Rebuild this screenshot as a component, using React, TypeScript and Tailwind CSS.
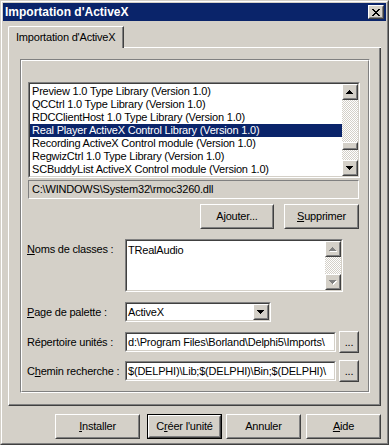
import React from 'react';

const libraries = [
	'Preview 1.0 Type Library (Version 1.0)',
	'QCCtrl 1.0 Type Library (Version 1.0)',
	'RDCClientHost 1.0 Type Library (Version 1.0)',
	'Real Player ActiveX Control Library (Version 1.0)',
	'Recording ActiveX Control module (Version 1.0)',
	'RegwizCtrl 1.0 Type Library (Version 1.0)',
	'SCBuddyList ActiveX Control module (Version 1.0)',
];
const selected = 3;

const checker = 'bg-[repeating-conic-gradient(#ffffff_0%_25%,#d4d0c8_0%_50%)] bg-[length:2px_2px]';

// classic 3D raised bevel
const Raised: React.FC<{ className?: string; children?: React.ReactNode }> = ({ className = '', children }) => (
	<div className={`border border-t-white border-l-white border-r-[#404040] border-b-[#404040] bg-[#d4d0c8] ${className}`}>
		<div className="h-full w-full border border-t-[#d4d0c8] border-l-[#d4d0c8] border-r-[#808080] border-b-[#808080] flex items-center justify-center">
			{children}
		</div>
	</div>
);

// classic 3D sunken field
const Sunken: React.FC<{ className?: string; children?: React.ReactNode }> = ({ className = '', children }) => (
	<div className={`border border-t-[#808080] border-l-[#808080] border-r-white border-b-white ${className}`}>
		<div className="h-full w-full border border-t-[#404040] border-l-[#404040] border-r-[#d4d0c8] border-b-[#d4d0c8] bg-white flex overflow-hidden">
			{children}
		</div>
	</div>
);

const arrowPath = {
	up: 'M3 0h1v1h-1z M2 1h3v1h-3z M1 2h5v1h-5z M0 3h7v1h-7z',
	down: 'M0 0h7v1h-7z M1 1h5v1h-5z M2 2h3v1h-3z M3 3h1v1h-1z',
};

const Arrow: React.FC<{ dir: 'up' | 'down'; disabled?: boolean }> = ({ dir, disabled }) => (
	<svg width="8" height="5" viewBox="0 0 8 5" shapeRendering="crispEdges">
		{disabled && <path d={arrowPath[dir]} fill="#ffffff" transform="translate(1 1)" />}
		<path d={arrowPath[dir]} fill={disabled ? '#808080' : '#000000'} />
	</svg>
);

const CloseGlyph = () => (
	<svg width="8" height="7" viewBox="0 0 8 7" shapeRendering="crispEdges">
		<path
			fill="#000"
			d="M0 0h2v1h-2z M6 0h2v1h-2z M1 1h2v1h-2z M5 1h2v1h-2z M2 2h4v1h-4z M3 3h2v1h-2z M2 4h4v1h-4z M1 5h2v1h-2z M5 5h2v1h-2z M0 6h2v1h-2z M6 6h2v1h-2z"
		/>
	</svg>
);

const Button: React.FC<{ className?: string; children?: React.ReactNode; isDefault?: boolean }> = ({ className = '', children, isDefault }) =>
	isDefault ? (
		<div className={`border border-black ${className}`}>
			<Raised className="h-full w-full">{children}</Raised>
		</div>
	) : (
		<Raised className={className}>{children}</Raised>
	);

const U: React.FC<{ children: React.ReactNode }> = ({ children }) => (
	<span className="underline underline-offset-[1px]">{children}</span>
);

export default function App() {
	return (
		<div className="w-[389px] h-[445px] flex border border-t-[#d4d0c8] border-l-[#d4d0c8] border-r-[#404040] border-b-[#404040] bg-[#d4d0c8] font-['Liberation_Sans',Arial,sans-serif] text-[11px] leading-[13px] tracking-[-0.2px] text-black select-none">
			<div className="flex-1 flex flex-col border border-t-white border-l-white border-r-[#808080] border-b-[#808080] p-[1px]">
				{/* title bar */}
				<div className="h-[18px] bg-[#0a246a] flex items-center pl-[2px] pr-[2px]">
					<span className="flex-1 text-white font-bold text-[12px] tracking-normal">Importation d'ActiveX</span>
					<Raised className="w-[16px] h-[14px]">
						<CloseGlyph />
					</Raised>
				</div>

				<div className="flex flex-col pl-[5px] pr-[5px] pt-[5px]">
					{/* tab header */}
					<div className="flex h-[22px]">
						<div className="w-[116px] border-l border-t border-r border-l-white border-t-white border-r-[#404040] rounded-tl-[2px]">
							<div className="h-full border-r border-r-[#808080] pl-[7px] pt-[4px]">Importation d'ActiveX</div>
						</div>
						<div className="flex-1 border-b border-b-white" />
					</div>

					{/* tab page */}
					<div className="h-[358px] border-l border-l-white border-r border-r-[#404040] border-b border-b-[#404040]">
						<div className="h-full border-r border-r-[#808080] border-b border-b-[#808080] pl-[11px] pr-[9px] pt-[11px]">
							{/* etched group */}
							<div className="h-[334px] border border-t-[#808080] border-l-[#808080] border-r-white border-b-white">
								<div className="h-full border border-t-white border-l-white border-r-[#808080] border-b-[#808080] flex flex-col">
									{/* library list */}
									<Sunken className="ml-[6px] mt-[21px] w-[332px] h-[96px]">
										<div className="flex-1 flex flex-col pt-[1px]">
											{libraries.map((name, i) => (
												<div
													key={name}
													className={`h-[13px] pl-[2px] whitespace-nowrap ${i === selected ? 'bg-[#0a246a] text-white' : ''}`}
												>
													{name}
												</div>
											))}
										</div>
										<div className="w-[16px] flex flex-col">
											<Raised className="h-[16px]">
												<Arrow dir="up" />
											</Raised>
											<div className={`h-[42px] ${checker}`} />
											<Raised className="h-[8px]" />
											<div className={`flex-1 ${checker}`} />
											<Raised className="h-[16px]">
												<Arrow dir="down" />
											</Raised>
										</div>
									</Sunken>

									{/* file path */}
									<div className="ml-[6px] mt-[2px] w-[331px] h-[19px] border border-t-[#808080] border-l-[#808080] border-r-white border-b-white flex items-center pl-[3px]">
										C:\WINDOWS\System32\rmoc3260.dll
									</div>

									<div className="flex mt-[5px] ml-[178px] gap-[10px]">
										<Button className="w-[74px] h-[25px]">Ajouter...</Button>
										<Button className="w-[75px] h-[25px]">
											<span>
												<U>S</U>upprimer
											</span>
										</Button>
									</div>

									{/* class names */}
									<div className="flex mt-[10px] pl-[5px]">
										<div className="w-[98px] pt-[4px]">
											<U>N</U>oms de classes :
										</div>
										<Sunken className="w-[218px] h-[53px]">
											<div className="flex-1 pl-[1px] pt-[3px]">TRealAudio</div>
											<div className="w-[16px] flex flex-col">
												<Raised className="h-[16px]">
													<Arrow dir="up" disabled />
												</Raised>
												<div className={`flex-1 ${checker}`} />
												<Raised className="h-[16px]">
													<Arrow dir="down" disabled />
												</Raised>
											</div>
										</Sunken>
									</div>

									{/* palette page */}
									<div className="flex items-center mt-[10px] pl-[5px]">
										<div className="w-[98px]">
											<U>P</U>age de palette :
										</div>
										<Sunken className="w-[146px] h-[20px]">
											<div className="flex-1 pl-[1px] flex items-center">ActiveX</div>
											<Raised className="w-[16px] h-full">
												<Arrow dir="down" />
											</Raised>
										</Sunken>
									</div>

									{/* unit dir */}
									<div className="flex items-center mt-[9px] pl-[5px] h-[22px]">
										<div className="w-[98px]">Répertoire unités :</div>
										<Sunken className="w-[211px] h-[20px]">
											<div className="flex-1 pl-[1px] flex items-center whitespace-nowrap">
												d:\Program Files\Borland\Delphi5\Imports\
											</div>
										</Sunken>
										<Button className="ml-[3px] w-[20px] h-[22px]">...</Button>
									</div>

									{/* search path */}
									<div className="flex items-center mt-[7px] pl-[5px] h-[22px]">
										<div className="w-[98px]">
											C<U>h</U>emin recherche :
										</div>
										<Sunken className="w-[211px] h-[20px]">
											<div className="flex-1 pl-[1px] flex items-center whitespace-nowrap">
												$(DELPHI)\Lib;$(DELPHI)\Bin;$(DELPHI)\
											</div>
										</Sunken>
										<Button className="ml-[3px] w-[20px] h-[22px]">...</Button>
									</div>
								</div>
							</div>
						</div>
					</div>
				</div>

				{/* dialog buttons */}
				<div className="flex mt-[8px]">
					<Button className="ml-[52px] w-[85px] h-[25px]">
						<span>
							<U>I</U>nstaller
						</span>
					</Button>
					<Button isDefault className="ml-[7px] w-[75px] h-[25px]">
						<span>
							C<U>r</U>éer l'unité
						</span>
					</Button>
					<Button className="ml-[4px] w-[75px] h-[25px]">Annuler</Button>
					<Button className="ml-[5px] w-[75px] h-[25px]">
						<span>
							<U>A</U>ide
						</span>
					</Button>
				</div>
			</div>
		</div>
	);
}
